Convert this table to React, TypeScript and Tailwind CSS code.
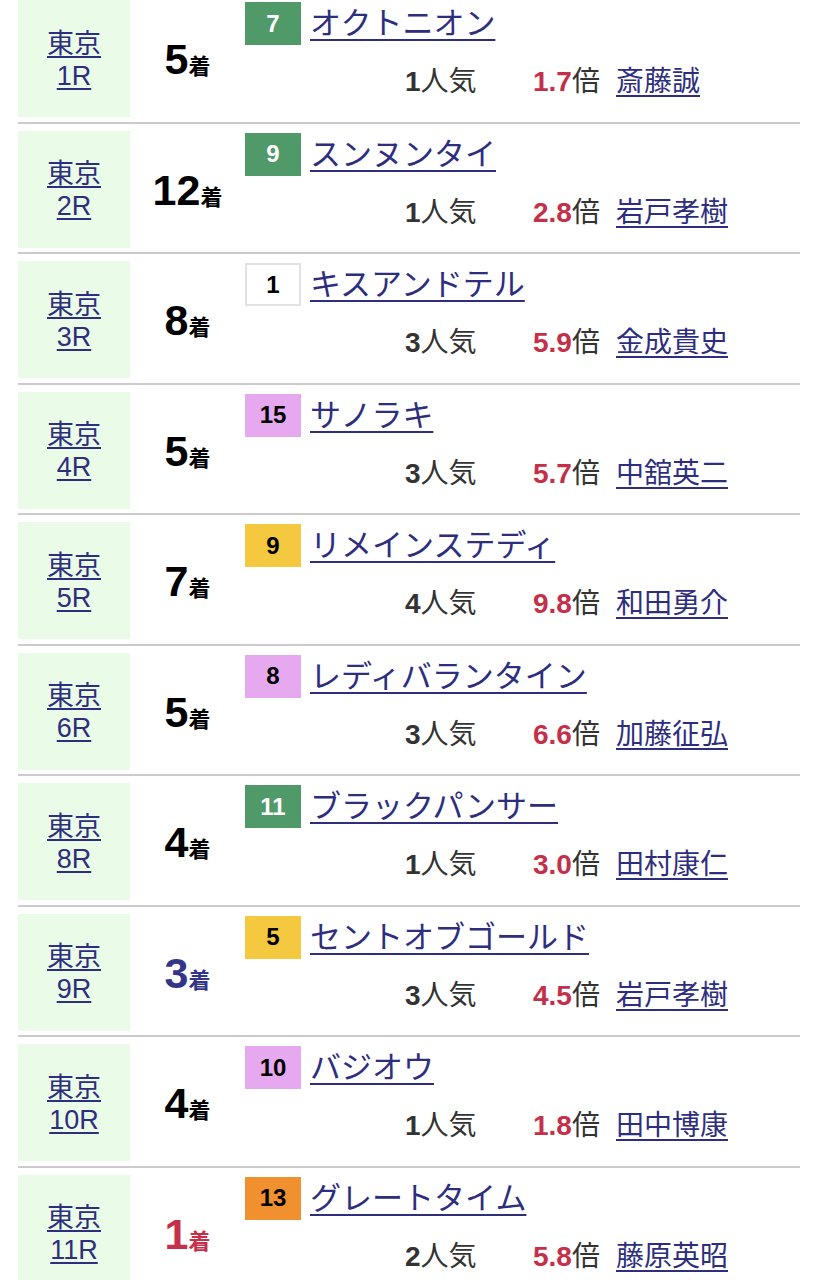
const races = [
  { course: "東京", race: "1R", rank: 5, waku: 7, color: "green", horse: "オクトニオン", pop: 1, odds: "1.7", jockey: "斎藤誠" },
  { course: "東京", race: "2R", rank: 12, waku: 9, color: "green", horse: "スンヌンタイ", pop: 1, odds: "2.8", jockey: "岩戸孝樹" },
  { course: "東京", race: "3R", rank: 8, waku: 1, color: "white", horse: "キスアンドテル", pop: 3, odds: "5.9", jockey: "金成貴史" },
  { course: "東京", race: "4R", rank: 5, waku: 15, color: "pink", horse: "サノラキ", pop: 3, odds: "5.7", jockey: "中舘英二" },
  { course: "東京", race: "5R", rank: 7, waku: 9, color: "yellow", horse: "リメインステディ", pop: 4, odds: "9.8", jockey: "和田勇介" },
  { course: "東京", race: "6R", rank: 5, waku: 8, color: "pink", horse: "レディバランタイン", pop: 3, odds: "6.6", jockey: "加藤征弘" },
  { course: "東京", race: "8R", rank: 4, waku: 11, color: "green", horse: "ブラックパンサー", pop: 1, odds: "3.0", jockey: "田村康仁" },
  { course: "東京", race: "9R", rank: 3, waku: 5, color: "yellow", horse: "セントオブゴールド", pop: 3, odds: "4.5", jockey: "岩戸孝樹" },
  { course: "東京", race: "10R", rank: 4, waku: 10, color: "pink", horse: "バジオウ", pop: 1, odds: "1.8", jockey: "田中博康" },
  { course: "東京", race: "11R", rank: 1, waku: 13, color: "orange", horse: "グレートタイム", pop: 2, odds: "5.8", jockey: "藤原英昭" },
];

// horse number badge colours
const badgeStyles: Record<string, string> = {
  green: "bg-[#4f9a68] text-white",
  white: "bg-white border-2 border-[#e2e2e2] text-black",
  pink: "bg-[#e6a8ee] text-black",
  yellow: "bg-[#f4c93f] text-black",
  orange: "bg-[#f0902e] text-black",
};

const rankColor = (r: number) => {
  if (r === 1) return "text-[#c4304a]";
  if (r === 3) return "text-[#343488]";
  return "text-black";
};

const App = () => {
  return (
    <div className="w-[819px] h-[1280px] overflow-hidden bg-white font-['Liberation_Sans','Noto_Sans_CJK_JP',sans-serif]">
      <div className="-mt-[7px] pl-[18px] pr-[19px]">
        {races.map((r) => (
          <div
            key={r.race}
            className="flex pt-[7px] pb-[4.5px] border-b-2 border-[#cbcbcb]"
          >
            {/* Course / race */}
            <div className="w-[112px] h-[117px] bg-[#eafbe7] flex flex-col items-center justify-center pt-[2px]">
              <a className="text-[27px] leading-[32px] text-[#2e2e7e] underline underline-offset-[3px] decoration-[1.5px]">
                {r.course}
              </a>
              <a className="text-[27px] leading-[32px] text-[#2e2e7e] underline underline-offset-[3px] decoration-[1.5px]">
                {r.race}
              </a>
            </div>

            {/* Rank */}
            <div className="w-[115px] h-[117px] flex items-center justify-center pt-[2px]">
              <span className={`font-bold ${rankColor(r.rank)}`}>
                <span className="text-[43px] leading-none">{r.rank}</span>
                <span className="text-[22px] leading-none">着</span>
              </span>
            </div>

            {/* Horse / odds */}
            <div className="flex flex-col">
              <div className="flex items-center mt-[2px] h-[43px]">
                <div
                  className={`w-[56px] h-[43px] flex items-center justify-center text-[24px] font-bold ${badgeStyles[r.color]}`}
                >
                  {r.waku}
                </div>
                <a className="ml-[9px] text-[31px] leading-[43px] text-[#2e2e7e] underline underline-offset-[5px] decoration-[2px] whitespace-nowrap">
                  {r.horse}
                </a>
              </div>
              <div className="flex items-center mt-[19px] h-[36px] text-[28px] leading-[36px] text-[#333] whitespace-nowrap">
                <span className="ml-[160px] w-[128px]">
                  <span className="font-bold">{r.pop}</span>人気
                </span>
                <span className="w-[83px]">
                  <span className="font-bold text-[#c4304a]">{r.odds}</span>倍
                </span>
                <a className="text-[#2e2e7e] underline underline-offset-[4px] decoration-[1.5px]">
                  {r.jockey}
                </a>
              </div>
            </div>
          </div>
        ))}
      </div>
    </div>
  );
};

export default App;
